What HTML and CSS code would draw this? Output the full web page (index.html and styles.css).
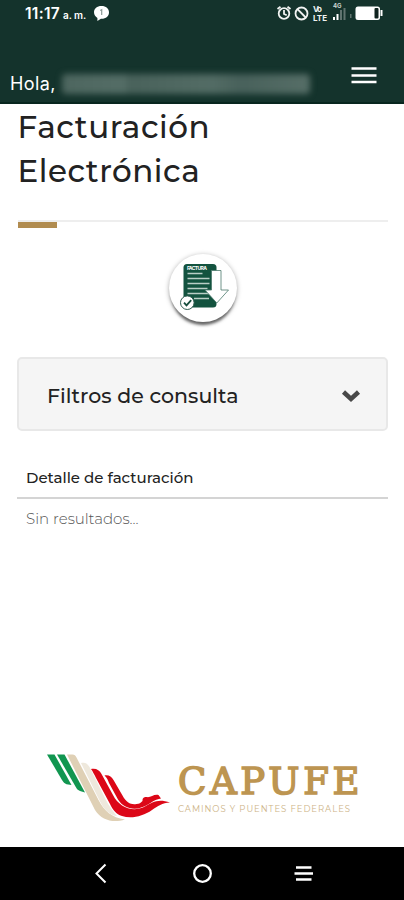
FILE: index.html
```html
<!DOCTYPE html>
<html lang="es">
<head>
<meta charset="utf-8">
<title>Facturación Electrónica</title>
<link rel="stylesheet" href="styles.css">
</head>
<body>
<header class="top">
  <div class="status">
    <div class="clock">11:17<small>a. m.</small>
      <svg class="bubble" width="17" height="17" viewBox="0 0 17 17"><path d="M8.5 1C4 1 1 3.6 1 7.3c0 2.5 1.3 4.5 3.4 5.6v3.1l3.5-2.2c5 .2 8.1-2.4 8.1-6.5C16 3.6 13 1 8.5 1z" fill="#fff"/><path d="M7.2 5.5 8.7 4.7V10" fill="none" stroke="#8b9995" stroke-width="1.2"/></svg>
    </div>
    <svg class="indicators" width="108" height="22" viewBox="0 0 108 22">
      <g fill="none" stroke="#f1f3f2" stroke-width="1.8"><circle cx="8" cy="13.5" r="5.3"/><path d="M8 10v4l2.7 1.3M1.5 9l3-2.3M11.500 6.700l3 2.300"/><circle cx="25.500" cy="13.500" r="6"/><path d="m21.500 9.200 8.200 8.300"/></g>
      <text class="net" x="37" y="12" textLength="9">Vo</text><text class="net" x="37" y="20.500" textLength="14">LTE</text>
      <text class="gen" x="57" y="8">4G</text>
      <path d="M57 17h2v3h-2zM60.500 14h2v6h-2z" fill="#fff"/><path d="M64 10h2v10h-2zM67.500 8h2v12h-2zM74 14h1.500v4H74z" fill="#60746f"/>
      <rect x="79.500" y="6.500" width="24.500" height="13.500" rx="2.500" fill="#fff"/><path d="M104.500 10h2v6h-2z" fill="#fff"/><rect x="98.500" y="8" width="4" height="10.500" rx="1" fill="#10231f"/>
    </svg>
  </div>
  <div class="greet"><span class="hello">Hola,</span><span class="redacted"></span>
    <svg class="menu" width="26" height="20" viewBox="0 0 26 20"><path d="M.5 2.500h25M.5 9.500h25M.5 16h25" stroke="#fff" stroke-width="2.500"/></svg>
  </div>
</header>
<main>
  <h1><span class="t1">Facturación</span><br><span class="t2">Electrónica</span></h1>
  <div class="rule"><i></i></div>
  <div class="download">
    <svg width="48" height="50" viewBox="0 0 48 50">
      <rect x="2.500" y="1" width="33" height="43.500" rx="3.500" fill="#13533f"/>
      <text class="paper" x="6" y="7.200" textLength="20">FACTURA</text>
      <path d="M6.500 10.500h15M6.500 15.500h22M6.500 20.500h22M6.500 25.500h20M6.500 30.500h22M13 35.500h15" stroke="#b9cec6" stroke-width="1.600"/>
      <path d="M30.500 7.500H40V27h7.500L35.800 40 24 27h6.500z" fill="#fff" stroke="#4b7a6c" stroke-width=".8"/>
      <circle cx="6.300" cy="39.700" r="6.800" fill="#fff" stroke="#315f52"/><path d="m3 39.700 2.500 2.700 4.700-5.200" fill="none" stroke="#164d3d" stroke-width="1.800"/>
    </svg>
  </div>
  <section class="filters"><span>Filtros de consulta</span>
    <svg width="20" height="14" viewBox="0 0 20 14"><path d="m2.500 3 7.500 7 7.500-7" fill="none" stroke="#484848" stroke-width="4.500"/></svg>
  </section>
  <h2>Detalle de facturación</h2>
  <p>Sin resultados...</p>
</main>
<footer>
  <svg width="404" height="90" viewBox="0 740 404 90">
    <g fill="#119650"><path d="M47 754.500h7.500l17 30.500-5-.7c-2-.8-3-2-4.500-4.300z"/><path d="M57 754.500h7.500l20.500 38-5-1.500c-2-.8-3-2-4.500-4.500z"/></g>
    <path d="M67 754.500h5.500c2 0 3 1 4 3L98.500 800c6 11 13 17.500 26.500 19.500-11 3.500-23 1.500-30-9.500z" fill="#dfd0b5"/>
    <path d="M81 763c4-1 6.500.5 8.500 4L104 796c5 11 10 16 13 20-8-1-12-5.500-17-14.500z" fill="#eee8dc"/>
    <g fill="#dc0717"><path d="M91 769c5-1 8.500 1 10.500 5l11.500 21c6 12 19 17.500 31 12 9-5 14-8.500 26-4.500-8 .5-12 3.500-18 7.500-9 6.500-21 9-30 6-6-2-9-6-12-12L96 778c-2-4-3-6-5-9z"/><path d="M104.500 775.500c4-.8 7 .8 9 4.500l9 15.500c4 7.500 9 9.500 14 8.500 3 0 4-1 6-3 0-3 1-4 4-4 4 1 7-3 12-2l2.500 3.500c-6 1-8 3-13 6-11 7-24 5-30-5l-9-16.500c-1-3-2-5-4.500-7.500z"/></g>
    <text class="brand" x="178" y="794" textLength="181.500" lengthAdjust="spacing">CAPUFE</text>
    <text class="tag" x="178" y="812.200" textLength="172">CAMINOS Y PUENTES FEDERALES</text>
  </svg>
  <nav>
    <svg width="404" height="53" viewBox="0 847 404 53" fill="none" stroke="#fff"><path d="m105.500 864.500-9 9 9 9" stroke-width="2"/><circle cx="202.500" cy="873.500" r="8.300" stroke-width="2.300"/><path d="M296 867.500h15.500M294.500 873.500H313M296 879.500h15.500" stroke-width="2.500"/></svg>
  </nav>
</footer>
</body>
</html>
```
FILE: styles.css
```css
*{box-sizing:border-box}
body{margin:0;width:404px;height:900px;display:flex;flex-direction:column;background:#fff;font-family:Montserrat,Inter,sans-serif;color:#222;overflow:hidden}
.top{height:104px;background:#14332c;border-bottom:2px solid #08261f;color:#fff;flex:none}
.status{height:56px;display:flex;justify-content:space-between;padding:0 20px 0 25px}
.clock{display:flex;align-items:baseline;height:28px;padding-top:4px;font:600 15.500px/20px Inter,sans-serif;letter-spacing:.3px}
.clock small{font-size:10px;margin-left:3px;letter-spacing:-.1px}
.bubble{align-self:flex-start;margin:1px 0 0 7px}
.net{font:700 8px Inter,sans-serif;fill:#f1f3f2}
.gen{font:700 6px Inter,sans-serif;fill:#cdd5d2}
.greet{height:46px;display:flex;align-items:center;padding:8px 27px 0 10px}
.hello{font:400 18px/24px Inter,sans-serif;letter-spacing:.4px;width:52px;margin-top:2px}
.redacted{width:248px;height:20px;background:linear-gradient(90deg,#4d665f,#546d66 25%,#49625b 27%,#536c65 60%,#48615b 72%,#566e67);filter:blur(3px);border-radius:4px;margin-top:2px}
.menu{margin:-15px 0 0 auto}
main{padding:0 16px 0 17px;flex:1}
h1{margin:0;padding:1px 0 0 .5px;font-size:31px;line-height:44px;font-weight:500;height:116px}
.t1{letter-spacing:.6px}
.t2{letter-spacing:.5px}
.rule{border-top:2px solid #eee;height:8px;margin-left:1px}
.rule i{display:block;width:39px;height:6px;background:#b18c50}
.download{width:68px;height:68px;border-radius:50%;margin:26px auto 0 152px;background:#fff;box-shadow:0 5px 3px -2px #666,0 1px 5px #aaa;padding:9px 0 0 12px}
.download svg{display:block;overflow:visible}
.paper{font:700 5px Inter,sans-serif;fill:#fff}
.filters{height:74px;margin-top:35px;border:2px solid #e8e8e8;border-radius:5px;background:#f5f5f5;display:flex;align-items:center;justify-content:space-between;padding:2px 25px 0 28px;font-size:20.500px;font-weight:500;letter-spacing:.05px}
.filters svg{margin-top:2px}
h2{margin:29px 0 0;height:39px;padding:5px 0 0 9px;border-bottom:2px solid #d4d4d4;font-size:15px;line-height:25px;font-weight:500}
p{margin:0;padding:7px 9px;font-size:15px;line-height:25px;font-weight:300;color:#555}
footer{flex:none}
footer svg{display:block}
nav{height:53px;background:#000;margin-top:17px}
.brand{font:400 37px "DejaVu Serif",serif;fill:#bd9551;stroke:#bd9551;stroke-width:1.600px}
.tag{font:400 8.500px Montserrat,Inter,sans-serif;fill:#cdb386}
```
